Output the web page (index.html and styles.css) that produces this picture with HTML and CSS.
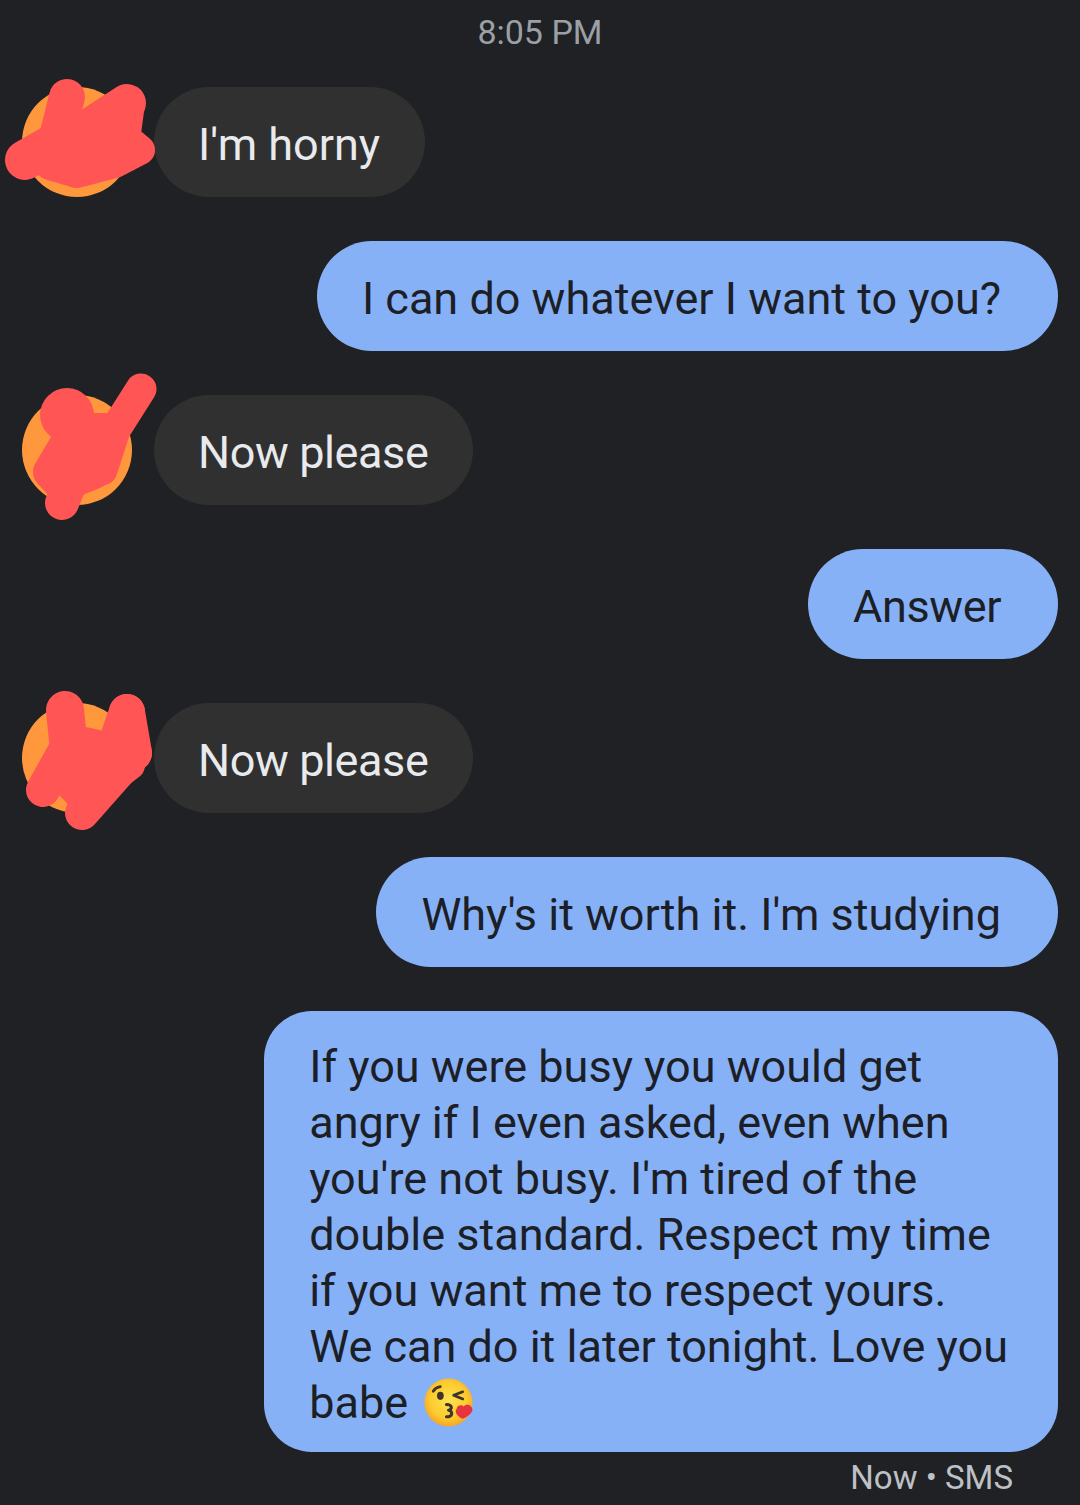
FILE: index.html
```html
<!DOCTYPE html>
<html lang="en">
  <head>
    <meta charset="UTF-8" />
    <meta name="viewport" content="width=device-width, initial-scale=1.0" />
    <title>Messages</title>
    <link rel="stylesheet" href="styles.css">
  </head>
  <body>
    <div class="thread">
      <div class="time-divider">8:05 PM</div>

      <div class="row incoming">
        <div class="avatar">
          <!-- Red scribble drawn over the contact picture -->
          <svg class="scribble scribble-1" viewBox="0 60 200 160" width="200" height="160">
            <path stroke-width="36" d="M67 97 L55 145" />
            <path stroke-width="38" d="M127 103 L70 140" />
            <path stroke-width="36" d="M127 103 L122 140" />
            <path stroke-width="40" d="M25 160 L60 140" />
            <path stroke-width="30" d="M60 135 L122 135 L140 150 L115 163 L77 173 L50 165 Z" />
          </svg>
        </div>
        <div class="bubble">I'm horny</div>
      </div>

      <div class="row outgoing">
        <div class="bubble">I can do whatever I want to you?</div>
      </div>

      <div class="row incoming">
        <div class="avatar">
          <svg class="scribble scribble-2" viewBox="0 360 200 170" width="200" height="170">
            <circle stroke-width="0" cx="67" cy="415" r="27" />
            <path stroke-width="31" d="M141 389 L115 430 L102 470" />
            <path stroke-width="34" d="M62 503 L75 470" />
            <path stroke-width="34" d="M75 430 L105 430 L94 472 L62 485 L50 472 Z" />
          </svg>
        </div>
        <div class="bubble tight">Now please</div>
      </div>

      <div class="row outgoing">
        <div class="bubble tight">Answer</div>
      </div>

      <div class="row incoming">
        <div class="avatar">
          <svg class="scribble scribble-3" viewBox="0 680 200 160" width="200" height="160">
            <path stroke-width="38" d="M65 710 L70 760" />
            <path stroke-width="36" d="M127 712 L112 755" />
            <path stroke-width="36" d="M127 712 L134 753" />
            <path stroke-width="34" d="M85 745 L105 750" />
            <path stroke-width="34" d="M135 753 L82 813" />
            <path stroke-width="34" d="M43 790 L68 745" />
            <path stroke-width="30" d="M70 745 L85 742 L120 750 L130 765 L85 800 L70 785 Z" />
          </svg>
        </div>
        <div class="bubble tight">Now please</div>
      </div>

      <div class="row outgoing">
        <div class="bubble">Why's it worth it. I'm studying</div>
      </div>

      <div class="row outgoing">
        <div class="bubble multiline">
          If you were busy you would get<br>
          angry if I even asked, even when<br>
          you're not busy. I'm tired of the<br>
          double standard. Respect my time<br>
          if you want me to respect yours.<br>
          We can do it later tonight. Love you<br>
          babe
          <svg class="emoji" viewBox="0 0 48 48" width="49" height="49">
            <defs>
              <radialGradient id="face" cx="50%" cy="45%" r="55%">
                <stop offset="0%" stop-color="#fde24f" />
                <stop offset="70%" stop-color="#fccb2e" />
                <stop offset="100%" stop-color="#f5a623" />
              </radialGradient>
            </defs>
            <circle cx="24" cy="24" r="23.500" fill="url(#face)" />
            <path d="M9 13 C10.500 10.500 13 9 16 8.500" class="emoji-line" />
            <ellipse cx="16" cy="17.500" rx="3.300" ry="4" fill="#40332b" />
            <path d="M38 13.500 L29 17 L38 20.500" class="emoji-line" />
            <path d="M22 26 C28 26 28 31 24 31.500 C28.500 32 28.500 38 22 38" class="emoji-line emoji-mouth" />
            <path d="M38 40 C31 37 30 32 32 30 C33 26 37 26 39 28 C41 25 47 26 47.500 31 C47 35 42 38 38 40 Z" fill="#e53341" />
          </svg>
        </div>
      </div>

      <div class="status">Now &bull; SMS</div>
    </div>
  </body>
</html>
```

FILE: styles.css
```css
/* General styles */
html,
body {
  margin: 0;
  height: 100%;
}

body {
  background-color: #202124;
  font-family: Roboto, "Liberation Sans", sans-serif;
  overflow: hidden;
}

.thread {
  display: flex;
  flex-direction: column;
  padding: 0 22px;
}

/* Timestamp above the conversation */
.time-divider {
  height: 87px;
  padding-top: 12px;
  box-sizing: border-box;
  text-align: center;
  font-size: 34px;
  line-height: 40px;
  color: #9aa0a6;
}

/* Message rows */
.row {
  display: flex;
  align-items: flex-start;
  margin-bottom: 44px;
}

.row.outgoing {
  justify-content: flex-end;
}

.row.incoming {
  gap: 22px;
}

.row:nth-last-child(2) {
  margin-bottom: 0;
}

.bubble {
  padding: 30px 45px 24px 44px;
  border-radius: 55px;
  font-size: 45px;
  line-height: 56px;
  white-space: nowrap;
}

.bubble.tight {
  letter-spacing: -0.4px;
}

.incoming .bubble {
  background-color: #303030;
  color: #e8eaed;
}

.outgoing .bubble {
  padding-left: 45px;
  padding-right: 57px;
  background-color: #87b1f7;
  color: #1c2026;
}

.outgoing .bubble.multiline {
  padding: 28px 50px 21px 45px;
  border-radius: 48px;
}

/* Contact picture with its scribble */
.avatar {
  position: relative;
  flex: none;
  width: 110px;
  height: 110px;
  border-radius: 50%;
  background-color: #ff973d;
}

.scribble {
  position: absolute;
  left: -22px;
  overflow: visible;
  fill: #ff5555;
  stroke: #ff5555;
  stroke-linejoin: round;
  stroke-linecap: round;
}

.scribble-1 {
  top: -27px;
}

.scribble-2 {
  top: -35px;
}

.scribble-3 {
  top: -23px;
}

/* Kiss emoji in the last message */
.emoji {
  vertical-align: -9px;
  margin-left: 5px;
}

.emoji-line {
  fill: none;
  stroke: #40332b;
  stroke-width: 2.600;
  stroke-linecap: round;
  stroke-linejoin: round;
}

.emoji-mouth {
  stroke-width: 3;
}

/* Delivery status under the last bubble */
.status {
  margin-top: 8px;
  padding-right: 45px;
  text-align: right;
  font-size: 33px;
  line-height: 36px;
  color: #bdc1c6;
}
```
